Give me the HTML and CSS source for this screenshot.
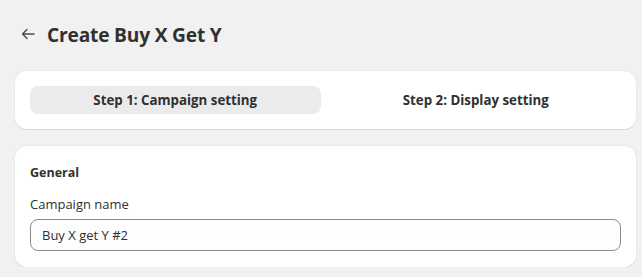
FILE: index.html
```html
<!DOCTYPE html>
<html lang="en">
<head>
<meta charset="utf-8">
<title>Create Buy X Get Y</title>
<link rel="stylesheet" href="styles.css">
</head>
<body>
<div class="page">
  <header class="header">
    <button class="back" aria-label="Back">
      <svg width="14" height="12" viewBox="0 0 14 12" fill="none" stroke="#4a4a4a" stroke-width="1.4" stroke-linecap="round" stroke-linejoin="round"><path d="M13 6H1.5M6 1.5L1.5 6L6 10.5"/></svg>
    </button>
    <h1 class="title">Create Buy X Get Y</h1>
  </header>
  <section class="card steps">
    <div class="step active">Step 1: Campaign setting</div>
    <div class="step">Step 2: Display setting</div>
  </section>
  <section class="card general">
    <h2 class="section-title">General</h2>
    <label class="label" for="name">Campaign name</label>
    <div class="input">Buy X get Y #2</div>
  </section>
</div>
</body>
</html>
```
FILE: styles.css
```css
* { box-sizing: border-box; }
html, body { margin: 0; }
body {
  background: #f1f1f1;
  font-family: "Open Sans", "Noto Sans", sans-serif;
  color: #303030;
}
.page {
  padding: 20px 6px 0 15px;
  display: flex;
  flex-direction: column;
}
.header {
  display: flex;
  align-items: center;
  height: 28px;
  margin-bottom: 23px;
}
.back {
  border: 0;
  background: none;
  padding: 0;
  margin: 0 12px 0 6px;
  width: 14px;
  height: 14px;
  display: flex;
  align-items: center;
}
.title {
  margin: 0;
  font-size: 19.2px;
  font-weight: 700;
  color: #303030;
  letter-spacing: -0.2px;
}
.card {
  background: #fff;
  border-radius: 12px;
  box-shadow: 0 1px 0 rgba(0,0,0,0.08), 0 0 0 1px rgba(0,0,0,0.03);
}
.steps {
  padding: 15px;
  display: grid;
  grid-template-columns: 1fr 1fr;
  column-gap: 10px;
  margin-bottom: 17px;
}
.step {
  height: 28px;
  border-radius: 8px;
  display: flex;
  align-items: center;
  justify-content: center;
  font-size: 13.3px;
  font-weight: 700;
  color: #303030;
}
.step.active { background: #ebebeb; }
.general {
  padding: 17px 15px 16px;
  display: flex;
  flex-direction: column;
}
.section-title {
  margin: 0 0 11px;
  font-size: 12.5px;
  line-height: 20px;
  font-weight: 700;
}
.label {
  font-size: 13px;
  line-height: 20px;
  color: #303030;
  margin-bottom: 5px;
}
.input {
  height: 32px;
  border: 1px solid #8a8a8a;
  border-radius: 8px;
  background: #fdfdfd;
  padding: 0 11px;
  display: flex;
  align-items: center;
  font-size: 13px;
  color: #303030;
}
```
